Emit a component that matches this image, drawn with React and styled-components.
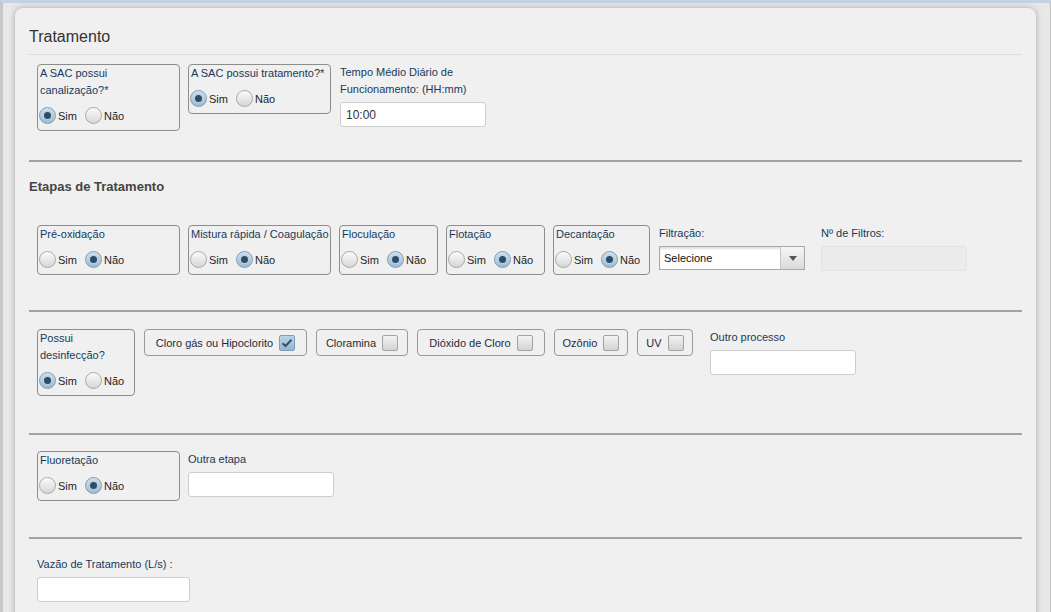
import styled, { createGlobalStyle } from "styled-components";

const GlobalStyle = createGlobalStyle`
  html, body {
    margin: 0;
    padding: 0;
    background: #e7e7e7;
    font-family: "Liberation Sans", Arial, sans-serif;
    overflow: hidden;
  }
`;

const LABEL_CLR = "#18395a";
const OPTION_CLR = "#1e1e1e";

const Radio = ({ checked, label }) => (
  <RadioOption>
    <RadioCircle $checked={checked}>{checked && <RadioDot />}</RadioCircle>
    {label}
  </RadioOption>
);

const YesNo = ({ value }) => (
  <RadioRow>
    <Radio label="Sim" checked={value === "sim"} />
    <Radio label="Não" checked={value === "nao"} />
  </RadioRow>
);

const QuestionBox = ({ label, width, value }) => (
  <OptionBox $w={width}>
    <BoxLabel>{label}</BoxLabel>
    <YesNo value={value} />
  </OptionBox>
);

const CheckItem = ({ label, width, checked }) => (
  <CheckBox $w={width}>
    {label}
    <CheckSquare $checked={checked}>
      {checked && (
        <svg width="12" height="10" viewBox="0 0 12 10">
          <path
            d="M1.5 5.2 L4.5 8 L10.5 1.8"
            fill="none"
            stroke="#2f5473"
            strokeWidth="2"
          />
        </svg>
      )}
    </CheckSquare>
  </CheckBox>
);

const etapas = [
  { label: "Pré-oxidação", width: 143 },
  { label: "Mistura rápida / Coagulação", width: 143 },
  { label: "Floculação", width: 99 },
  { label: "Flotação", width: 99 },
  { label: "Decantação", width: 97 },
];

const desinfeccao = [
  { label: "Cloro gás ou Hipoclorito", width: 163, checked: true },
  { label: "Cloramina", width: 92 },
  { label: "Dióxido de Cloro", width: 128 },
  { label: "Ozônio", width: 74 },
  { label: "UV", width: 56 },
];

const App = () => {
  return (
    <Page>
      <GlobalStyle />
      <Panel>
        <Title>Tratamento</Title>

        <Section $top={9} $bottom={29}>
          <Row>
            <QuestionBox
              label={"A SAC possui\ncanalização?*"}
              width={143}
              value="sim"
            />
            <QuestionBox
              label="A SAC possui tratamento?*"
              width={143}
              value="sim"
            />
            <Field $ml={1}>
              <FieldLabel>Tempo Médio Diário de Funcionamento: (HH:mm)</FieldLabel>
              <TextInput defaultValue="10:00" />
            </Field>
          </Row>
        </Section>
        <Divider />

        <Section $top={16} $bottom={35}>
          <SubTitle>Etapas de Tratamento</SubTitle>
          <Row $mt={29}>
            {etapas.map((e) => (
              <QuestionBox
                key={e.label}
                label={e.label}
                width={e.width}
                value="nao"
                $h={50}
              />
            ))}
            <Field $ml={1}>
              <FieldLabel>Filtração:</FieldLabel>
              <Select>
                <SelectText>Selecione</SelectText>
                <SelectArrow>
                  <svg width="8" height="5" viewBox="0 0 8 5">
                    <path d="M0 0 H8 L4 5 Z" fill="#555" />
                  </svg>
                </SelectArrow>
              </Select>
            </Field>
            <Field $ml={8}>
              <FieldLabel>Nº de Filtros:</FieldLabel>
              <TextInput disabled $disabled />
            </Field>
          </Row>
        </Section>
        <Divider />

        <Section $top={17} $bottom={37}>
          <Row $gap={9}>
            <QuestionBox label="Possui desinfecção?" width={98} value="sim" />
            {desinfeccao.map((d) => (
              <CheckItem
                key={d.label}
                label={d.label}
                width={d.width}
                checked={d.checked}
              />
            ))}
            <Field $ml={8}>
              <FieldLabel>Outro processo</FieldLabel>
              <TextInput />
            </Field>
          </Row>
        </Section>
        <Divider />

        <Section $top={16} $bottom={36}>
          <Row>
            <QuestionBox label="Fluoretação" width={143} value="nao" />
            <Field>
              <FieldLabel>Outra etapa</FieldLabel>
              <TextInput />
            </Field>
          </Row>
        </Section>
        <Divider />

        <Section $top={17} $bottom={30}>
          <Row>
            <Field>
              <FieldLabel>Vazão de Tratamento (L/s) :</FieldLabel>
              <TextInput $w={153} />
            </Field>
          </Row>
        </Section>
      </Panel>
    </Page>
  );
};

export default App;

const Page = styled.div`
  box-sizing: border-box;
  min-height: 612px;
  border-top: 3px solid #c3d3e5;
  border-left: 3px solid #c8c8c8;
  border-right: 1px solid #c2c2c2;
  padding: 5px 14px 0 12px;
  background: #e8e8e8;
`;

const Panel = styled.div`
  background: #f0f0f0;
  border-radius: 8px 8px 0 0;
  box-shadow: 0 0 6px rgba(0, 0, 0, 0.28);
  padding: 16px 14px 40px;
`;

const Title = styled.h2`
  margin: 0;
  font-size: 16px;
  font-weight: normal;
  line-height: 26px;
  color: #333;
  padding-bottom: 4px;
  border-bottom: 1px solid #dcdcdc;
`;

const SubTitle = styled.h3`
  margin: 0;
  font-size: 13px;
  font-weight: bold;
  line-height: 18px;
  color: #444;
`;

const Section = styled.div`
  padding-top: ${(p) => p.$top}px;
  padding-bottom: ${(p) => p.$bottom}px;
`;

const Divider = styled.hr`
  margin: 0;
  border: 0;
  border-top: 2px solid #a2a2a2;
`;

const Row = styled.div`
  display: flex;
  align-items: flex-start;
  gap: ${(p) => p.$gap || 8}px;
  padding-left: 8px;
  margin-top: ${(p) => p.$mt || 0}px;
`;

const OptionBox = styled.div`
  box-sizing: border-box;
  width: ${(p) => p.$w}px;
  border: 1px solid #8d8d8d;
  border-radius: 4px;
  padding: 0 0 3px 2px;
`;

const BoxLabel = styled.div`
  font-size: 11px;
  line-height: 17px;
  color: ${LABEL_CLR};
  white-space: pre-line;
`;

const RadioRow = styled.div`
  display: flex;
  align-items: center;
  height: 23px;
  margin-top: 5px;
  margin-left: -1px;
`;

const RadioOption = styled.label`
  display: flex;
  align-items: center;
  gap: 2px;
  margin-right: 8px;
  font-size: 11px;
  color: ${OPTION_CLR};
`;

const RadioCircle = styled.span`
  box-sizing: border-box;
  width: 17px;
  height: 17px;
  border-radius: 50%;
  display: flex;
  align-items: center;
  justify-content: center;
  border: 1px solid ${(p) => (p.$checked ? "#7f9db8" : "#a8a8a8")};
  background: ${(p) =>
    p.$checked
      ? "linear-gradient(#cfe0ee, #9dbbd3)"
      : "linear-gradient(#fbfbfb, #d6d6d6)"};
`;

const RadioDot = styled.span`
  width: 7px;
  height: 7px;
  border-radius: 50%;
  background: #2d4c68;
  box-shadow: 0 0 0 1px #b9cfe1;
`;

const CheckBox = styled.div`
  box-sizing: border-box;
  width: ${(p) => p.$w}px;
  height: 27px;
  border: 1px solid #999;
  border-radius: 4px;
  display: flex;
  align-items: center;
  justify-content: center;
  gap: 6px;
  font-size: 11px;
  color: #1f2c3a;
`;

const CheckSquare = styled.span`
  box-sizing: border-box;
  width: 16px;
  height: 16px;
  border-radius: 2px;
  display: flex;
  align-items: center;
  justify-content: center;
  border: 1px solid ${(p) => (p.$checked ? "#7f9db8" : "#a3a3a3")};
  background: ${(p) =>
    p.$checked
      ? "linear-gradient(#bcd3e6, #98b7cf)"
      : "linear-gradient(#f3f3f3, #d3d3d3)"};
`;

const Field = styled.div`
  display: flex;
  flex-direction: column;
  margin-left: ${(p) => p.$ml || 0}px;
  width: 146px;
`;

const FieldLabel = styled.div`
  font-size: 11px;
  line-height: 17px;
  color: ${LABEL_CLR};
  margin-bottom: 4px;
`;

const TextInput = styled.input`
  box-sizing: border-box;
  width: ${(p) => p.$w || 146}px;
  height: 25px;
  border: 1px solid ${(p) => (p.$disabled ? "#e2e2e2" : "#cdcdcd")};
  border-radius: 3px;
  background: ${(p) => (p.$disabled ? "#ebebeb" : "#fff")};
  font-family: "Liberation Sans", Arial, sans-serif;
  font-size: 12px;
  color: #333;
  padding: 0 5px;
  outline: none;
`;

const Select = styled.div`
  box-sizing: border-box;
  width: 146px;
  height: 24px;
  display: flex;
  border: 1px solid #a9a9a9;
  background: #fff;
  box-shadow: inset 0 2px 2px rgba(0, 0, 0, 0.12);
`;

const SelectText = styled.div`
  flex: 1;
  display: flex;
  align-items: center;
  padding-left: 4px;
  font-size: 11px;
  color: #111;
`;

const SelectArrow = styled.div`
  width: 23px;
  display: flex;
  align-items: center;
  justify-content: center;
  border-left: 1px solid #c6c6c6;
  background: linear-gradient(#f6f6f6, #dadada);
`;
